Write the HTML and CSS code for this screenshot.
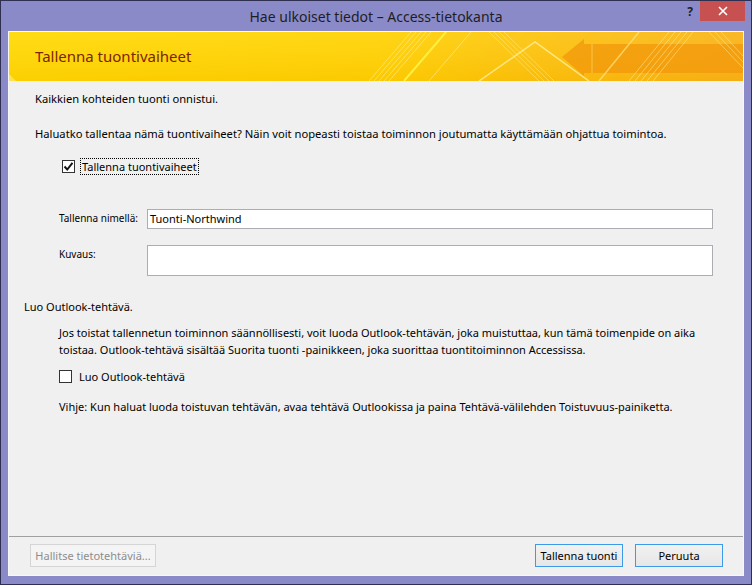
FILE: index.html
```html
<!DOCTYPE html>
<html lang="fi">
<head>
    <meta charset="UTF-8">
    <title>Hae ulkoiset tiedot – Access-tietokanta</title>
    <link rel="stylesheet" href="styles.css">
</head>
<body>

    <div class="window">
        <div class="titlebar">
            <span class="title">Hae ulkoiset tiedot – Access-tietokanta</span>
            <span class="help">?</span>
            <span class="close">
                <svg width="10" height="10" viewBox="0 0 10 10">
                    <path d="M1 1 L9 9 M9 1 L1 9" stroke="#fff" stroke-width="1.6"/>
                </svg>
            </span>
        </div>

        <div class="dialog">
            <!-- yellow header band -->
            <div class="banner">
                <svg class="banner-art" width="734" height="49" viewBox="0 0 734 49" preserveAspectRatio="none">
                    <defs>
                        <linearGradient id="base" x1="0" y1="0" x2="1" y2="0">
                            <stop offset="0" stop-color="#ffd900"/>
                            <stop offset="0.5" stop-color="#ffd200"/>
                            <stop offset="0.75" stop-color="#fcc10c"/>
                            <stop offset="1" stop-color="#f9b215"/>
                        </linearGradient>
                        <linearGradient id="shade" x1="0" y1="0" x2="0" y2="1">
                            <stop offset="0" stop-color="#fff" stop-opacity="0.08"/>
                            <stop offset="1" stop-color="#e08a00" stop-opacity="0.12"/>
                        </linearGradient>
                    </defs>
                    <rect width="734" height="49" fill="url(#base)"/>
                    <rect width="734" height="49" fill="url(#shade)"/>
                    <!-- left diagonal stripes -->
                    <g stroke="#fff3a0" stroke-opacity="0.55" stroke-width="1">
                        <path d="M360 49 L402 0"/>
                        <path d="M365 49 L407 0"/>
                        <path d="M370 49 L412 0"/>
                        <path d="M375 49 L417 0"/>
                        <path d="M380 49 L422 0"/>
                    </g>
                    <path d="M395 49 L437 0" stroke="#ffef40" stroke-width="2"/>
                    <path d="M420 49 L462 0" stroke="#fff6b0" stroke-opacity="0.5"/>
                    <!-- peak -->
                    <path d="M470 49 L526 10 L580 49" fill="none" stroke="#fff0a0" stroke-opacity="0.8" stroke-width="1.5"/>
                    <g stroke="#fff3a0" stroke-opacity="0.45" stroke-width="1">
                        <path d="M480 0 L530 49"/>
                        <path d="M485 0 L535 49"/>
                        <path d="M490 0 L540 49"/>
                        <path d="M495 0 L545 49"/>
                    </g>
                    <!-- arrow -->
                    <path d="M553 25 L575 7 L575 12 L734 12 L734 41 L575 41 L575 44 Z" fill="#f29a0c" fill-opacity="0.8"/>
                    <path d="M583 12 L583 41" stroke="#ffe070" stroke-opacity="0.6"/>
                    <!-- right stripes -->
                    <g stroke="#fff3a0" stroke-opacity="0.5" stroke-width="1">
                        <path d="M620 49 L660 0"/>
                        <path d="M626 49 L666 0"/>
                        <path d="M632 49 L672 0"/>
                        <path d="M638 49 L678 0"/>
                        <path d="M644 49 L684 0"/>
                    </g>
                    <path d="M590 49 L630 0" stroke="#ffe680" stroke-opacity="0.7" stroke-width="1.5"/>
                    <g stroke="#fff3a0" stroke-opacity="0.45" stroke-width="1">
                        <path d="M700 0 L734 36"/>
                        <path d="M706 0 L734 30"/>
                        <path d="M712 0 L734 24"/>
                    </g>
                    <path d="M0 42 L7 49 L0 49 Z" fill="#fff3a0" fill-opacity="0.5"/>
                </svg>
                <h1>Tallenna tuontivaiheet</h1>
            </div>

            <div class="content">
                <p class="intro">Kaikkien kohteiden tuonti onnistui.</p>
                <p class="intro ask">Haluatko tallentaa nämä tuontivaiheet? Näin voit nopeasti toistaa toiminnon joutumatta käyttämään ohjattua toimintoa.</p>

                <label class="check first">
                    <span class="box checked">
                        <svg width="11" height="11" viewBox="0 0 11 11">
                            <path d="M1.5 5.5 L4.2 8.5 L9.5 1.8" fill="none" stroke="#111" stroke-width="1.9"/>
                        </svg>
                    </span>
                    <span class="focus">Tallenna tuontivaiheet</span>
                </label>

                <div class="fields">
                    <div class="field">
                        <span class="label">Tallenna nimellä:</span>
                        <div class="input">Tuonti-Northwind</div>
                    </div>
                    <div class="field">
                        <span class="label">Kuvaus:</span>
                        <div class="input area"></div>
                    </div>
                </div>

                <p class="section">Luo Outlook-tehtävä.</p>
                <p class="indent">Jos toistat tallennetun toiminnon säännöllisesti, voit luoda Outlook-tehtävän, joka muistuttaa, kun tämä toimenpide on aika toistaa. Outlook-tehtävä sisältää Suorita tuonti -painikkeen, joka suorittaa tuontitoiminnon Accessissa.</p>

                <label class="check second">
                    <span class="box"></span>
                    <span class="text">Luo Outlook-tehtävä</span>
                </label>

                <p class="indent tip">Vihje: Kun haluat luoda toistuvan tehtävän, avaa tehtävä Outlookissa ja paina Tehtävä-välilehden Toistuvuus-painiketta.</p>
            </div>

            <div class="footer">
                <button class="btn disabled">Hallitse tietotehtäviä...</button>
                <div class="actions">
                    <button class="btn">Tallenna tuonti</button>
                    <button class="btn">Peruuta</button>
                </div>
            </div>
        </div>
    </div>

</body>
</html>
```

FILE: styles.css
```css
* {
    box-sizing: border-box;
    margin: 0;
    padding: 0;
}

html, body {
    width: 752px;
    height: 585px;
    overflow: hidden;
    background: #fff;
    font-family: 'Noto Sans', 'Open Sans', sans-serif;
    color: #000;
}

.window {
    width: 752px;
    height: 585px;
    border: 1px solid #2f2f52;
    background: #8a8ac9;
    padding: 0 7px 8px 7px;
    display: flex;
    flex-direction: column;
}

.titlebar {
    height: 30px;
    flex: none;
    position: relative;
}

.title {
    position: absolute;
    left: 0;
    right: 0;
    top: 6px;
    text-align: center;
    font-size: 14px;
    color: #1e1e1e;
}

.help {
    position: absolute;
    right: 51px;
    top: 2px;
    font-size: 12px;
    font-weight: bold;
    color: #222;
}

.close {
    position: absolute;
    right: -1px;
    top: 0;
    width: 45px;
    height: 20px;
    background: #c75050;
    display: flex;
    align-items: center;
    justify-content: center;
}

.dialog {
    flex: 1;
    background: #f0f0f0;
    border: 1px solid #f7f7f7;
    display: flex;
    flex-direction: column;
}

.banner {
    height: 49px;
    flex: none;
    position: relative;
    display: flex;
    align-items: center;
    padding-left: 26px;
}

.banner-art {
    position: absolute;
    left: 0;
    top: 0;
    display: block;
}

.banner h1 {
    position: relative;
    font-weight: normal;
    font-size: 15px;
    color: #7a2600;
    padding-bottom: 2px;
}

.content {
    flex: 1;
    padding: 10px 0 0 15px;
    font-size: 11px;
    line-height: 16px;
}

.intro {
    margin-left: 11px;
    font-size: 11.2px;
}

.ask {
    margin-top: 19px;
}

.check {
    display: flex;
    align-items: center;
    height: 17px;
}

.check.first {
    margin: 16px 0 0 38px;
}

.check.second {
    margin: 10px 0 0 35px;
}

.box {
    width: 13px;
    height: 13px;
    border: 1px solid #333;
    background: #fff;
    display: flex;
    align-items: center;
    justify-content: center;
    margin-right: 5px;
}

.focus {
    border: 1px dotted #000;
    padding: 0 1px;
    line-height: 15px;
}

.text {
    margin-left: 2px;
}

.fields {
    margin: 34px 30px 0 35px;
    display: flex;
    flex-direction: column;
    gap: 16px;
}

.field {
    display: flex;
    align-items: flex-start;
}

.label {
    width: 88px;
    flex: none;
    font-size: 10px;
    padding-top: 1px;
}

.input {
    flex: 1;
    height: 20px;
    background: #fff;
    border: 1px solid #abadb3;
    padding: 1px 2px;
    line-height: 16px;
}

.input.area {
    height: 31px;
}

.section {
    margin-top: 23px;
}

.indent {
    margin: 9px 30px 0 35px;
    line-height: 17px;
}

.tip {
    margin-top: 13px;
}

.footer {
    height: 39px;
    flex: none;
    border-top: 1px solid #a0a0a0;
    display: flex;
    align-items: flex-start;
    justify-content: space-between;
    padding: 7px 20px 0 21px;
}

.actions {
    display: flex;
    gap: 12px;
}

.btn {
    height: 23px;
    width: 88px;
    padding: 0;
    white-space: nowrap;
    font-family: 'Noto Sans', 'Open Sans', sans-serif;
    font-size: 11px;
    color: #000;
    background: linear-gradient(#f2f2f2, #e6e6e6);
    border: 1px solid #3c9ae8;
}

.btn.disabled {
    width: 126px;
    color: #8d8d8d;
    background: #f4f4f4;
    border-color: #d5d5d5;
}
```
